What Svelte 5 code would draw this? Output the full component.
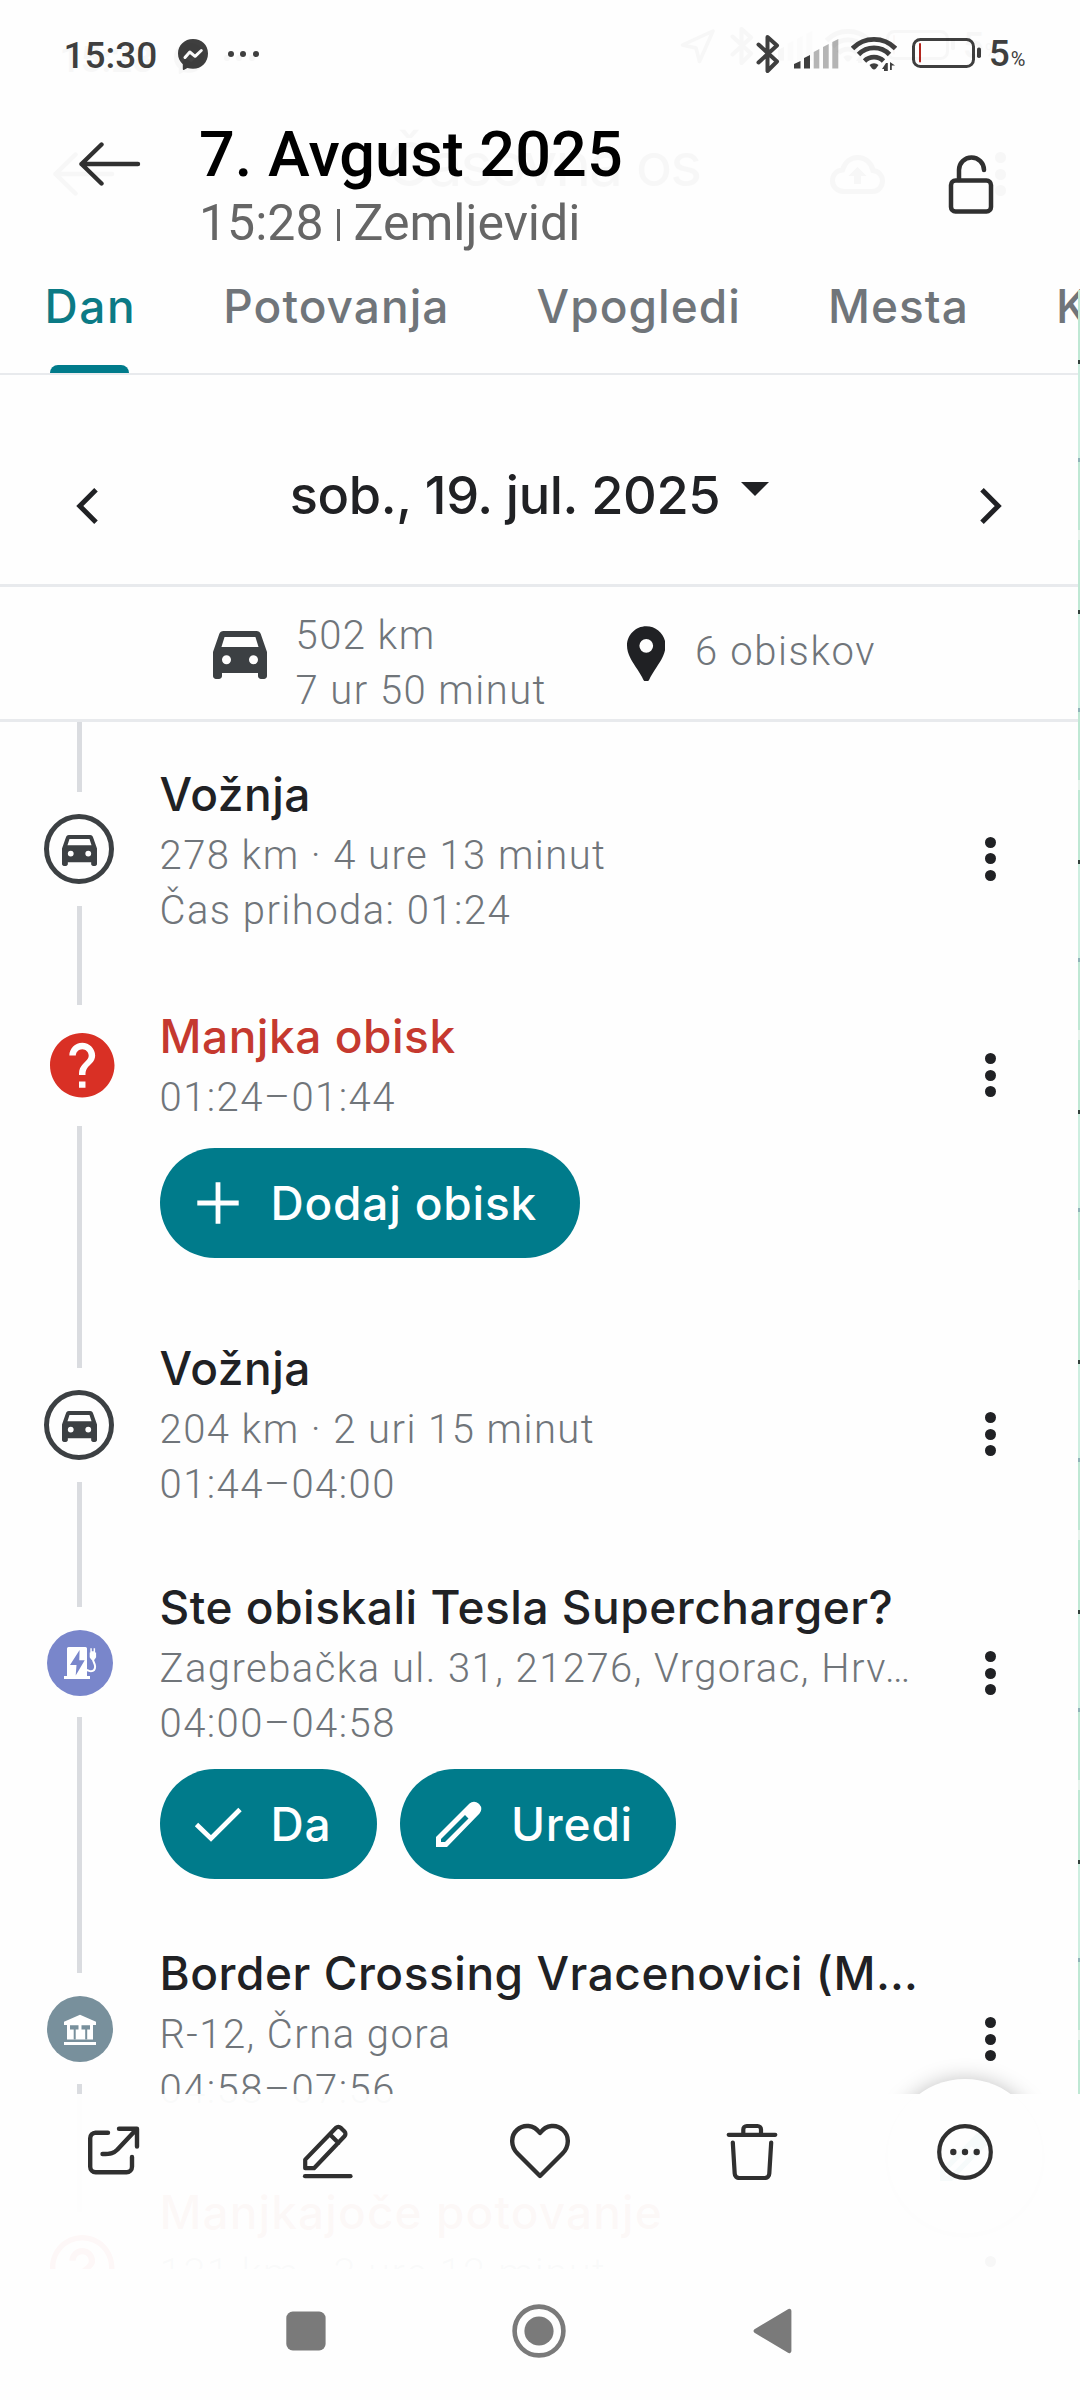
<script>
  const tabs = ['Dan', 'Potovanja', 'Vpogledi', 'Mesta', 'K'];

  const entries = [
    { icon: 'drive', size: 'first', title: 'Vožnja', lines: ['278 km · 4 ure 13 minut', 'Čas prihoda: 01:24'] },
    { icon: 'missing', size: 'missing', title: 'Manjka obisk', alert: true, lines: ['01:24–01:44'], actions: [{ icon: 'plus', label: 'Dodaj obisk' }] },
    { icon: 'drive', size: 'plain', title: 'Vožnja', lines: ['204 km · 2 uri 15 minut', '01:44–04:00'] },
    { icon: 'charger', size: 'asked', title: 'Ste obiskali Tesla Supercharger?', lines: ['Zagrebačka ul. 31, 21276, Vrgorac, Hrv…', '04:00–04:58'], actions: [{ icon: 'check', label: 'Da' }, { icon: 'pencil', label: 'Uredi' }] },
    { icon: 'bank', size: 'plain', title: 'Border Crossing Vracenovici (M…', lines: ['R-12, Črna gora', '04:58–07:56'] },
    { icon: 'unknown', size: 'plain', title: 'Manjkajoče potovanje', alert: true, wide: true, lines: ['131 km · 3 ure 12 minut'] }
  ];
</script>

{#snippet car(cls)}
  <svg class={cls} viewBox="3 5 18 16" preserveAspectRatio="none">
    <path fill="currentColor" fill-rule="evenodd" d="M18.92 6.01C18.72 5.42 18.16 5 17.5 5h-11c-.66 0-1.21.42-1.42 1.01L3 12v8c0 .55.45 1 1 1h1c.55 0 1-.45 1-1v-1h12v1c0 .55.45 1 1 1h1c.55 0 1-.45 1-1v-8zM6.85 7h10.29l1.04 3.3H5.81zM7.5 16.1a1.5 1.5 0 1 1 0-3 1.5 1.5 0 0 1 0 3zm9 0a1.5 1.5 0 1 1 0-3 1.5 1.5 0 0 1 0 3z" />
  </svg>
{/snippet}

{#snippet statusLeft(time)}
  <div class="status-left">
    <span class="clock">{time}</span>
    <svg class="messenger" viewBox="0 0 30 31">
      <path fill="currentColor" d="M15 0C6.500 0 0 6.200 0 14.500c0 4.500 1.800 8 4.800 10.700V30c0 .8.8 1.200 1.500.8l3-1.800c1.800.5 3.700.8 5.700.8 8.500 0 15-6.500 15-15.300S23.500 0 15 0z" />
      <path fill="none" stroke="#fefefe" stroke-width="3" stroke-linejoin="round" stroke-linecap="round" d="M7 18.500l4.800-5.500 5.300 4.300 6.200-5.800" />
    </svg>
    <span class="dots"><i></i><i></i><i></i></span>
  </div>
{/snippet}

{#snippet bluetooth()}
  <svg class="bluetooth" viewBox="0 0 24 40">
    <path fill="none" stroke="currentColor" stroke-width="4" stroke-linejoin="round" stroke-linecap="round" d="M2.500 10.500L21 27.500 11.500 37V3L21 11.500 2.500 28.500" />
  </svg>
{/snippet}

{#snippet statusRight()}
  <div class="status-right">
    {@render bluetooth()}
    <svg class="signal" viewBox="0 0 45 30">
      <path fill="currentColor" d="M0 29.500V25l6.500-3v7.500zM10 29.500V19l6-3v13.500z" />
      <path fill="currentColor" opacity=".38" d="M19.700 29.500V13l5.600-3v19.500zM29 29.500V8l5.700-3v24.500zM38.300 29.500V3L44.300 0v29.500z" />
    </svg>
    <svg class="wifi" viewBox="0 0 46 35">
      <g fill="none" stroke="currentColor" stroke-width="4.800">
        <path d="M1.500 12.500a30 30 0 0 1 43 0" />
        <path d="M7.500 18.500a21.500 21.500 0 0 1 31 0" />
        <path d="M13.500 25a13.500 13.500 0 0 1 19 0" />
      </g>
      <path fill="currentColor" d="M18.500 29a6.500 6.500 0 0 1 9 0l-2.500 3.500a3 3 0 0 1-4 0z" />
      <path fill="currentColor" d="M35 35v-8l-4 6h2v2zM39 26v8h1.800v-4.500H44zM35 27h1.800v8H35z" />
    </svg>
    <svg class="battery" viewBox="0 0 70 30">
      <rect x="1.500" y="1.500" width="60" height="27" rx="7" fill="none" stroke="currentColor" stroke-width="3" />
      <rect class="low" x="7" y="5" width="2" height="19.500" rx="1" />
      <rect x="65" y="9.500" width="4" height="10.500" rx="1.800" fill="currentColor" />
    </svg>
    <span class="percent">5<small>%</small></span>
  </div>
{/snippet}

{#snippet backArrow()}
  <svg class="back" viewBox="0 0 62 44">
    <path fill="none" stroke="currentColor" stroke-width="4.400" stroke-linecap="round" stroke-linejoin="round" d="M22.500 2.500L2.500 22l20 19.500M2.500 22H59" />
  </svg>
{/snippet}

<main>
  <div class="veil top-veil" aria-hidden="true">
    <div class="status">
      {@render statusLeft('15:28')}
      <div class="veil-status">
        <svg class="locate" viewBox="0 0 36 36"><path fill="none" stroke="currentColor" stroke-width="3.500" stroke-linejoin="round" d="M2.500 17L33 3 19.500 33.500 16 20z" /></svg>
        {@render statusRight()}
      </div>
    </div>
    <div class="veil-bar">
      {@render backArrow()}
      <span class="veil-title">Časovna os</span>
      <svg class="cloud" viewBox="0 0 55 39">
        <path fill="none" stroke="currentColor" stroke-width="5" d="M14 36.500C7 36.500 2.500 31.500 2.500 26c0-6 4-10.500 10-11C15 7 21 2.500 27.500 2.500c8 0 14 5.500 15.500 13 5.500.5 9.500 5 9.500 10.300 0 6-4.500 10.700-10.500 10.700z" />
        <path fill="currentColor" d="M27.500 12l9 9h-5.500v8h-7v-8h-5.500z" />
      </svg>
      <span class="kebab"><i></i><i></i><i></i></span>
    </div>
  </div>

  <div class="status">
    {@render statusLeft('15:30')}
    {@render statusRight()}
  </div>

  <header>
    {@render backArrow()}
    <div class="heading">
      <h1>7. Avgust 2025</h1>
      <p><span>15:28</span><i></i><span>Zemljevidi</span></p>
    </div>
    <svg class="lock" viewBox="0 0 48 62">
      <g fill="none" stroke="currentColor" stroke-width="4.500" stroke-linecap="round">
        <rect x="4" y="26.500" width="40" height="31" rx="4.500" />
        <path d="M12 26V16a12.500 12.500 0 0 1 25 0" />
      </g>
    </svg>
  </header>

  <nav class="tabs">
    {#each tabs as tab, i}
      <span class="tab" class:active={i === 0}>{tab}</span>
    {/each}
  </nav>

  <section class="date">
    <svg class="chevron" viewBox="0 0 22 36"><path fill="none" stroke="currentColor" stroke-width="5" d="M20 1.800L3.800 18 20 34.200" /></svg>
    <div class="day"><span>sob., 19. jul. 2025</span><i></i></div>
    <svg class="chevron" viewBox="0 0 22 36"><path fill="none" stroke="currentColor" stroke-width="5" d="M2 1.800L18.200 18 2 34.200" /></svg>
  </section>

  <section class="summary">
    <div class="driven">
      {@render car('summary-car')}
      <p>502 km<br />7 ur 50 minut</p>
    </div>
    <div class="visits">
      <svg class="pin" viewBox="5 2 14 20"><path fill="currentColor" fill-rule="evenodd" d="M12 2C8.130 2 5 5.130 5 9c0 3.300 2 6 3.800 8.700 1 1.600 1.600 2.500 2 3.500.3.700.7.900 1.200.9s.9-.2 1.200-.9c.4-1 1-1.900 2-3.500C17 15 19 12.300 19 9c0-3.870-3.130-7-7-7zm0 9.600a2.500 2.500 0 1 1 0-5 2.500 2.500 0 0 1 0 5z" /></svg>
      <p>6 obiskov</p>
    </div>
  </section>

  <section class="timeline">
    {#each entries as entry}
      <article class={entry.size}>
        <div class="rail">
          <div class="line before"></div>
          <div class="badge {entry.icon}">
            {#if entry.icon === 'drive'}
              {@render car('badge-car')}
            {:else if entry.icon === 'missing'}
              <svg viewBox="2 2 20 20"><path fill="currentColor" d="M12 2C6.480 2 2 6.480 2 12s4.480 10 10 10 10-4.480 10-10S17.520 2 12 2zm1 17h-2v-2h2v2zm2.070-7.750l-.9.92C13.450 12.900 13 13.500 13 15h-2v-.5c0-1.100.45-2.100 1.170-2.830l1.240-1.260c.37-.36.59-.86.59-1.410 0-1.100-.9-2-2-2s-2 .9-2 2H8c0-2.210 1.790-4 4-4s4 1.790 4 4c0 .88-.36 1.680-.93 2.250z" /></svg>
            {:else if entry.icon === 'unknown'}
              <svg viewBox="2 2 20 20"><path fill="currentColor" d="M11 18h2v-2h-2v2zm1-16C6.480 2 2 6.480 2 12s4.480 10 10 10 10-4.480 10-10S17.520 2 12 2zm0 18.300c-4.600 0-8.300-3.700-8.300-8.300S7.400 3.700 12 3.700s8.300 3.700 8.300 8.300-3.700 8.300-8.300 8.300zM12 6c-2.210 0-4 1.790-4 4h2c0-1.100.9-2 2-2s2 .9 2 2c0 2-3 1.750-3 5h2c0-2.250 3-2.500 3-5 0-2.210-1.790-4-4-4z" /></svg>
            {:else if entry.icon === 'charger'}
              <svg viewBox="0 0 66 66">
                <circle cx="33" cy="33" r="33" fill="currentColor" />
                <path fill="#fff" d="M20 18.500a1.500 1.500 0 0 1 1.500-1.500h17a1.500 1.500 0 0 1 1.500 1.500V46h3v3H17v-3h3z" />
                <path fill="currentColor" d="M32.600 20L23 35h6.500l-.8 10.500L37.700 30.300h-5.400z" />
                <path fill="#fff" d="M43.300 22.500v-4.300h1.500v3h1.800v-3h1.500v4.300h1v4.700l-1.600 2.600h-3.200l-1.600-2.600v-4.700z" />
                <path fill="none" stroke="#fff" stroke-width="2" d="M45.900 29c0 3 2.200 4 2.200 7.500 0 3-1.700 4.700-4.100 4.700s-2.500-1.200-4.500-1.200" />
              </svg>
            {:else}
              <svg viewBox="0 0 66 66">
                <circle cx="33" cy="33" r="33" fill="currentColor" />
                <path fill="#fff" d="M17 25.700l16-7 16 7V29h-3v14.500H20V29h-3zM17 46h32v3H17z" />
                <path fill="currentColor" d="M23 29.300h8.500v4.200h-2.800v10h-2v-10H23zM34.500 29.300H43v4.200h-2.800v10h-2v-10h-3.700z" />
              </svg>
            {/if}
          </div>
          <div class="line after"></div>
        </div>
        <div class="body">
          <h2 class:alert={entry.alert} class:wide={entry.wide}>{entry.title}</h2>
          {#each entry.lines as line}<p>{line}</p>{/each}
          {#if entry.actions}
            <div class="actions">
              {#each entry.actions as action}
                <button>
                  {#if action.icon === 'plus'}
                    <svg viewBox="0 0 48 48"><path fill="none" stroke="currentColor" stroke-width="4.800" d="M24 3.300v41.400M3.300 24h41.400" /></svg>
                  {:else if action.icon === 'check'}
                    <svg viewBox="0 0 48 48"><path fill="none" stroke="currentColor" stroke-width="4.800" d="M2.500 24.500L17 38.500 46 9.500" /></svg>
                  {:else}
                    <svg viewBox="0 0 48 48"><path fill="currentColor" fill-rule="evenodd" d="M1 47V37L34.500 3.500a6.500 6.500 0 0 1 9 0l1 1a6.500 6.500 0 0 1 0 9L12 47zM6 42h4l23.500-23.500-3.500-3.500L6 39z" /></svg>
                  {/if}
                  <span>{action.label}</span>
                </button>
              {/each}
            </div>
          {/if}
        </div>
        <div class="kebab"><i></i><i></i><i></i></div>
      </article>
    {/each}
    <div class="fab"><svg viewBox="0 0 48 48"><path fill="currentColor" fill-rule="evenodd" d="M1 47V37L34.500 3.500a6.500 6.500 0 0 1 9 0l1 1a6.500 6.500 0 0 1 0 9L12 47zM6 42h4l23.500-23.500-3.500-3.500L6 39z" /></svg></div>
  </section>

  <div class="map-edge"></div>

  <footer class="toolbar">
    <svg viewBox="0 0 52 58"><g fill="none" stroke="currentColor" stroke-width="4.400" stroke-linecap="round" stroke-linejoin="round"><path d="M20 10.700H7.500A5.500 5.500 0 0 0 2.200 16.200V44.800A5.500 5.500 0 0 0 7.700 50.300H38.500A5.500 5.500 0 0 0 44 44.800V35" /><path d="M31 6.700H49V24.500M48.500 7.200L29.500 27.500C26 31 23 32 14.500 32" /></g></svg>
    <svg class="edit" viewBox="-1 0 52 58"><g fill="none" stroke="currentColor" stroke-width="4.200" stroke-linecap="round" stroke-linejoin="round"><path d="M3 54.200H48.500" /><path d="M3.200 46.200V37.600L34 5.800a3.300 3.300 0 0 1 4.700 0L42.500 9.600a3.300 3.300 0 0 1 0 4.600L12 46.200zM28 12.500L36.500 21" /></g></svg>
    <svg class="round" viewBox="0 0 60 58"><path fill="none" stroke="currentColor" stroke-width="4.400" stroke-linejoin="round" d="M30 54L7.500 31.500C.2 24.200.8 13.500 7 8 13.500 2 23.500 2.500 30 11 36.500 2.500 46.500 2 53 8c6.200 5.500 6.800 16.200-.5 23.500z" /></svg>
    <svg viewBox="0 0 52 58"><g fill="none" stroke="currentColor" stroke-width="4.200" stroke-linecap="round" stroke-linejoin="round"><path d="M2.700 12.800H49.300M17.300 12V7.500A3.500 3.500 0 0 1 20.800 4H31.500A3.500 3.500 0 0 1 35 7.500V12M6.800 20.500L8.700 51.500A4.500 4.500 0 0 0 13.200 56H38.800A4.500 4.500 0 0 0 43.300 51.500L45.200 20.500" /></g></svg>
    <svg class="round" viewBox="0 0 60 58"><circle cx="30" cy="30" r="25.800" fill="none" stroke="currentColor" stroke-width="4.200" /><g fill="currentColor"><circle cx="18.300" cy="30" r="3.200" /><circle cx="30" cy="30" r="3.200" /><circle cx="41.700" cy="30" r="3.200" /></g></svg>
  </footer>

  <div class="system-nav">
    <svg viewBox="0 0 54 54"><rect x="7.300" y="7.500" width="39.300" height="39" rx="6.500" fill="currentColor" /></svg>
    <svg viewBox="0 0 54 54"><circle cx="27" cy="27" r="24.400" fill="none" stroke="currentColor" stroke-width="4.600" /><circle cx="27" cy="27" r="14.600" fill="currentColor" /></svg>
    <svg viewBox="0 0 54 54"><path fill="currentColor" d="M9.500 25.300L43 5.200a2.200 2.200 0 0 1 3.400 1.900v39.800a2.200 2.200 0 0 1-3.400 1.900L9.500 28.700a2 2 0 0 1 0-3.400z" /></svg>
  </div>
</main>

<style>
  :global(body) { background: #fefefe; }
  main { position: relative; display: flex; flex-direction: column; width: 1080px; height: 2400px; overflow: hidden; background: #fefefe; color: #202124; font-family: Roboto, sans-serif; }
  h1, h2, p { margin: 0; font-weight: inherit; }
  svg { display: block; flex: none; }

  .status { display: flex; justify-content: space-between; height: 82px; color: #3f3f3f; }
  .status-left { display: flex; align-items: center; height: 60px; padding: 24px 0 0 63.500px; box-sizing: content-box; }
  .clock { width: 114.500px; font-size: 37px; line-height: 60px; font-weight: 500; letter-spacing: 0; margin-top: 4px; }
  .messenger { width: 30px; height: 31px; }
  .dots { display: flex; gap: 6.500px; margin: 0 0 0 19.500px; }
  .dots i { width: 6px; height: 6px; border-radius: 50%; background: currentColor; }
  .status-right { display: flex; align-items: center; height: 60px; padding: 24px 54.500px 0 0; }
  .bluetooth { width: 24px; height: 40px; margin-right: 14px; margin-top: -1px; }
  .signal { width: 45px; height: 30px; margin-right: 12px; }
  .wifi { width: 46px; height: 35px; margin-right: 15px; margin-top: -2px; }
  .battery { width: 70px; height: 30px; margin-right: 7px; margin-top: -2px; }
  .low { fill: #b3261e; }
  .percent { font-size: 37px; line-height: 60px; font-weight: 500; margin-top: 4px; white-space: nowrap; }
  .percent small { font-size: 20px; font-weight: 400; margin-left: 1px; }

  .veil { color: #000; opacity: .025; }
  .top-veil { position: absolute; left: 0; right: 0; top: 0; height: 262px; }
  .top-veil .status { margin: 4px 0 -4px -4px; color: #000; }
  .veil-status { display: flex; align-items: center; height: 84px; margin-right: 26px; }
  .veil-status .status-right { padding-top: 0; }
  .locate { width: 36px; height: 36px; margin: 0 14px 0 0; }
  .veil-bar { display: flex; align-items: center; height: 184px; }
  .veil-bar .back { margin-left: 53px; }
  .veil-title { width: 444px; margin: -21px 0 0 271px; font: 400 61px/70px Inter, sans-serif; letter-spacing: -2.300px; white-space: nowrap; }
  .cloud { width: 55px; height: 39px; }
  .veil-bar .kebab { width: auto; height: auto; margin-left: 110px; }

  header { display: flex; height: 180px; box-sizing: border-box; padding-top: 38px; color: #303030; }
  .back { width: 62px; height: 44px; }
  header .back { margin: 22px 0 0 79px; }
  .heading { width: 747.500px; margin-left: 58px; }
  h1 { font-size: 63px; line-height: 70px; font-weight: 500; letter-spacing: .05px; color: #000; }
  .heading p { display: flex; align-items: flex-start; font-size: 50px; line-height: 66px; color: #666; }
  .heading i { width: 2.500px; height: 32px; margin: 19px 14px 0 13.500px; background: #666; }
  .lock { width: 48px; height: 62px; margin-top: 34px; }

  .tabs { display: flex; gap: 87px; height: 113px; box-sizing: border-box; border-bottom: 2px solid #e8eaed; padding: 14px 0 0 44.500px; font: 500 46px/60px Inter, sans-serif; letter-spacing: 1.050px; color: #70757a; white-space: nowrap; }
  .tab { flex: none; }
  .tab.active { display: flex; flex-direction: column; justify-content: space-between; letter-spacing: 1.600px; color: #0b7a85; }
  .tab.active::after { content: ''; height: 8px; width: 79px; margin-left: 5.500px; border-radius: 8px 8px 0 0; background: #007b8b; }

  .date { display: flex; align-items: center; justify-content: space-between; height: 212px; box-sizing: border-box; padding: 52px 78px 0 76px; border-bottom: 3px solid #e8eaed; }
  .chevron { width: 22px; height: 36px; }
  .day { display: flex; align-items: center; margin: 0 19px 21px 0; }
  .day span { font: 500 52.300px/80px Inter, sans-serif; letter-spacing: -.36px; white-space: nowrap; }
  .day i { border: 14px solid transparent; border-top-color: currentColor; border-bottom: 0; margin: 0 0 12px 21px; }

  .summary { display: flex; height: 135px; box-sizing: border-box; padding: 20.500px 0 0 213px; border-bottom: 3px solid #e8eaed; }
  .summary p, .body p { font-weight: 300; font-size: 40px; line-height: 55px; letter-spacing: 1.450px; color: #70757a; white-space: nowrap; }
  .driven { display: flex; width: 413.500px; }
  .summary-car { width: 54px; height: 48px; margin: 23.500px 28.500px 0 0; color: #3c4043; }
  .visits { display: flex; }
  .pin { width: 38.500px; height: 55.500px; margin: 18px 30px 0 0; }
  .visits p { margin-top: 16px; letter-spacing: 1.600px; }

  .timeline { position: relative; display: flex; flex-direction: column; height: 1547px; overflow: hidden; }
  article { display: grid; grid-template-columns: 159.500px 790px 82px; flex: none; height: 239px; }
  article.first { height: 280px; }
  article.missing { height: 332px; }
  article.asked { height: 366px; }
  .first .body { padding-top: 38px; }
  .first .kebab { padding-top: 36.500px; }
  .rail { display: flex; flex-direction: column; padding-left: 77px; min-height: 0; }
  .line { width: 5px; background: #dadce0; }
  .before { height: 34px; flex: none; }
  .after { flex: 1; }
  .first .before { height: 70px; }
  .missing .before { height: 2.600px; }
  .badge { display: flex; align-items: center; justify-content: center; width: 70px; height: 70px; margin: 20px 0 22px -33px; flex: none; }
  .badge svg { width: 66px; height: 66px; }
  .drive { box-sizing: border-box; border: 5px solid #3c4043; border-radius: 50%; color: #3c4043; margin-top: 22px; }
  .badge .badge-car { width: 35px; height: 31px; margin-top: 3px; }
  .badge.missing { color: #d93025; margin: 28.500px 0 28px -27px; width: 65px; height: 65px; }
  .badge.missing svg, .badge.unknown svg { width: 64.500px; height: 64.500px; }
  .badge.charger { margin: 21px 0 19px -32px; color: #7986cb; }
  .badge.bank { margin: 21px 0 20px -32px; color: #78909c; }
  .badge.unknown { color: #d93025; margin-left: -29.500px; }
  h2 { font: 500 46px/68px Inter, sans-serif; letter-spacing: .53px; white-space: nowrap; }
  h2.alert { color: #c5392f; }
  h2.wide { letter-spacing: 1.100px; }
  .kebab { display: flex; flex-direction: column; align-items: center; justify-content: center; gap: 5.500px; height: 200px; }
  .missing .kebab { height: 146px; }
  .kebab i { width: 11px; height: 11px; border-radius: 50%; background: currentColor; }
  .actions { display: flex; gap: 23.500px; margin-top: 18px; }
  .missing .actions { margin-top: 23px; }
  button { display: flex; align-items: center; min-width: 217px; height: 110px; margin: 0; padding: 0 43px 0 34.500px; border: 0; border-radius: 55px; background: #007b8b; color: #fff; font: 500 46px/68px Inter, sans-serif; letter-spacing: .8px; }
  button svg { width: 48px; height: 48px; margin-right: 28.500px; }

  .fab { position: absolute; left: 888px; top: 1357px; display: flex; align-items: center; justify-content: center; width: 154px; height: 154px; border-radius: 50%; background: #fefefe; color: #007b8b; box-shadow: 0 2px 22px rgba(0, 0, 0, .28); }
  .fab svg { width: 52px; height: 52px; }

  .map-edge { position: absolute; right: 0; top: 290px; width: 2px; height: 1804px; background: repeating-linear-gradient(#bfe8d4 0 70px, #33413c 70px 74px, #cdeee0 74px 168px, #8fb3b9 168px 172px, #bfe8d4 172px 240px, #e6f3ec 240px 250px); }

  .toolbar { position: absolute; left: 0; top: 2093.500px; display: flex; width: 1080px; height: 176px; box-sizing: border-box; justify-content: space-between; padding: 28.500px 85px 0 88px; background: rgba(254, 254, 254, .968); color: #303030; }
  .toolbar svg { width: 52px; height: 58px; }
  .toolbar svg.round { width: 60px; }
  .toolbar svg.edit { margin-left: 4px; }

  .system-nav { display: flex; justify-content: center; align-items: center; gap: 179px; height: 124px; margin-right: 1.500px; color: #7a7a7a; }
  .system-nav svg { width: 54px; height: 54px; }
</style>
